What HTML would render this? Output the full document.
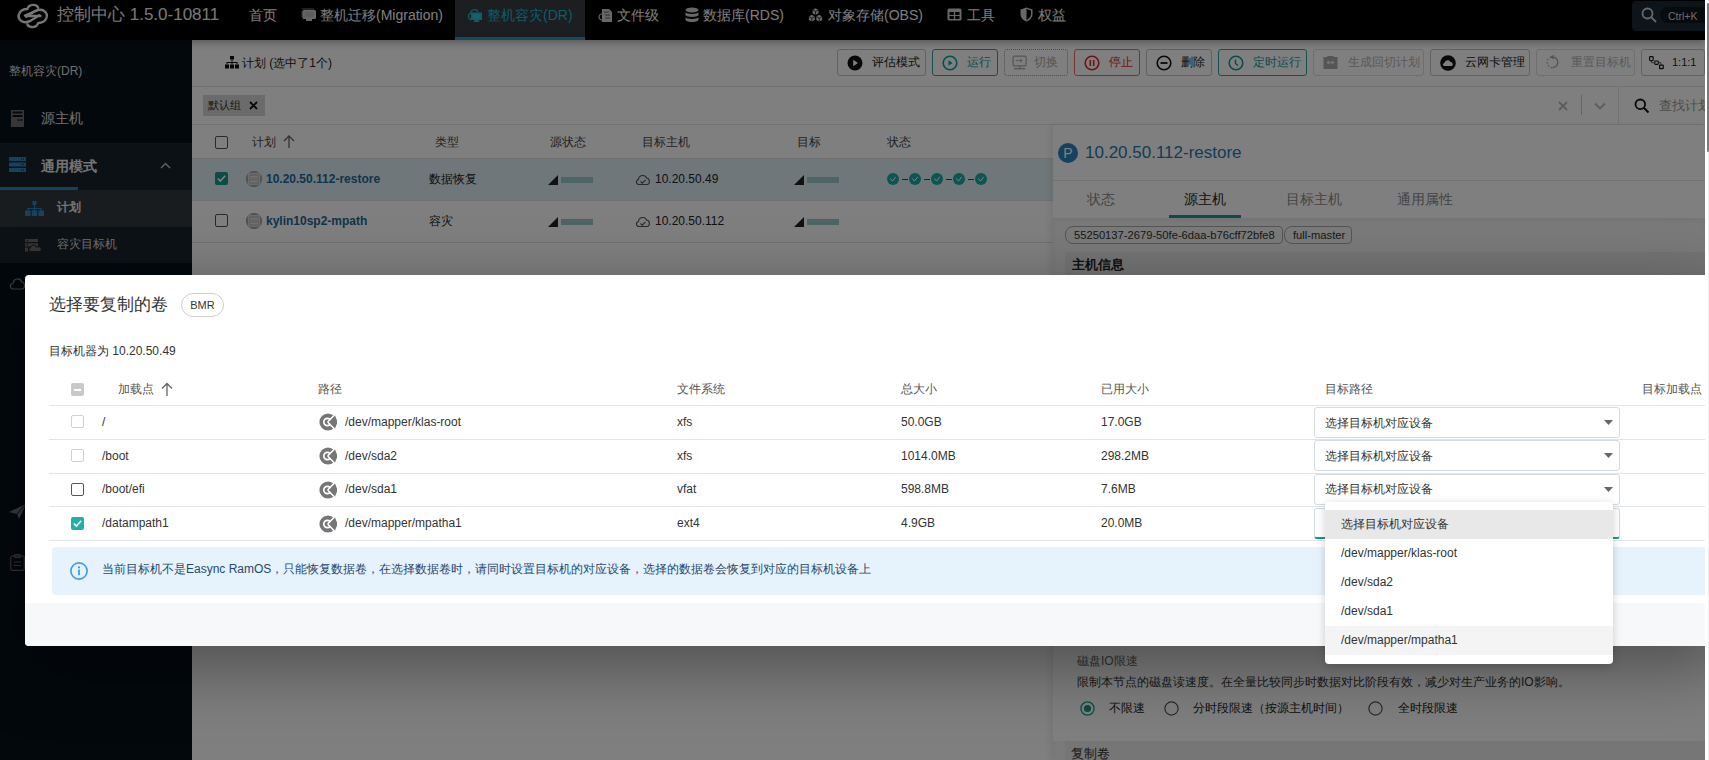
<!DOCTYPE html>
<html><head><meta charset="utf-8">
<style>
*{box-sizing:border-box}
html,body{margin:0;padding:0}
body{width:1709px;height:760px;overflow:hidden;position:relative;background:#fff;font-family:"Liberation Sans",sans-serif;font-size:12px;color:#333}
.abs{position:absolute}
#app{position:absolute;left:0;top:0;width:1705px;height:760px;overflow:hidden;background:#fff}
#nav{position:absolute;left:0;top:0;width:1705px;height:40px;background:#000;z-index:2;box-shadow:0 2px 8px rgba(0,0,0,.35);color:#fafafa;font-size:14px}
#nav .it{position:absolute;top:0;height:30px;line-height:30px;white-space:nowrap}
#side{position:absolute;left:0;top:40px;width:192px;height:720px;background:#07111b;color:#c8c8c8}
#main{position:absolute;left:192px;top:40px;width:1513px;height:720px;background:#fff}
.txt{position:absolute;white-space:nowrap;line-height:1}
#overlay{z-index:3;position:absolute;left:0;top:0;width:1705px;height:760px;background:rgba(0,0,0,.5)}
#modal{z-index:4;position:absolute;left:25px;top:275px;width:1700px;height:371px;background:#fff;border-radius:4px;box-shadow:0 20px 70px rgba(0,0,0,.4);overflow:hidden}
#dd{z-index:5;position:absolute;left:1325px;top:502px;width:288px;height:162px;background:#fff;border-radius:4px;box-shadow:0 2px 10px rgba(0,0,0,.18)}
#strip{position:absolute;left:1705px;top:0;width:4px;height:760px;background:#fff}
#strip:after{content:"";position:absolute;left:2.5px;top:0;width:1.5px;height:760px;background:#f0f0f0}
#strip:before{content:"";position:absolute;z-index:1;left:2.4px;top:3px;width:1.6px;height:149px;background:#7c7c7c;border-radius:1px}
.btn{position:absolute;top:49px;height:27px;border-radius:3px;background:#fff;display:flex;align-items:center;padding-left:9px;font-size:12px;white-space:nowrap}
.btn svg{margin-right:9px;flex:none}
#content{position:absolute;left:0;top:0;width:1705px;height:760px}
</style></head><body>
<div id="app">
  <div id="nav">
    <svg class="abs" style="left:14px;top:0" width="38" height="32" viewBox="0 0 902 760"><g fill="none" stroke="#ededed" stroke-width="56" stroke-linecap="round" stroke-linejoin="round"><path d="M 575 185 C 545 95, 355 80, 315 215 C 130 215, 40 400, 175 500 C 240 545, 330 525, 400 490 L 600 360"/><path d="M 315 575 C 345 665, 535 680, 575 545 C 760 545, 850 360, 715 260 C 650 215, 560 235, 490 270 L 290 400"/><path d="M 260 370 L 560 240"/><path d="M 330 380 L 630 380"/></g></svg>
    <div class="it" style="left:57px;font-size:17px;line-height:29px;color:#f0f0f0">控制中心 1.5.0-10811</div>
    <div class="it" style="left:249px">首页</div>
    <svg class="abs" style="left:301px;top:8px" width="16" height="14" viewBox="0 0 16 14"><rect x="1.5" y="2" width="13.5" height="9" rx="1.5" fill="#d0d0d0"/><rect x="3.5" y="3.5" width="9.5" height="6" fill="#bbb"/><rect x="5" y="11" width="6" height="2" fill="#ccc"/><path d="M2 0v2M4 0v2M6 0v2M8 0v2M10 0v2M12 0v2M0 4h2M0 6h2M0 8h2" stroke="#aaa" stroke-width="0.8"/></svg>
    <div class="it" style="left:320px">整机迁移(Migration)</div>
    <div class="abs" style="left:455px;top:0;width:130px;height:40px;background:#383c44"></div>
    <div class="abs" style="left:455px;top:37px;width:130px;height:3px;background:#2894c6"></div>
    <svg class="abs" style="left:467px;top:8px" width="16" height="15" viewBox="0 0 16 15"><path d="M4.3 11.5 C1 11.5 0.5 6 3.6 5.3 C4 1 10 0.5 11 4" fill="none" stroke="#1cb8cc" stroke-width="1.2"/><rect x="4" y="4.5" width="11" height="7.5" fill="#1cb8cc"/><rect x="5.5" y="6" width="8" height="4.5" fill="#22c6d8"/><path d="M7.5 12h4l1 2h-6z" fill="#1cb8cc"/></svg>
    <div class="it" style="left:487px;color:#1cb8cc">整机容灾(DR)</div>
    <svg class="abs" style="left:598px;top:8px" width="15" height="15" viewBox="0 0 15 15"><path d="M4 1h7l3 3v10H4z" fill="#d0d0d0"/><path d="M6 4h5M6 7h6M6 10h6" stroke="#555" stroke-width="1"/><circle cx="4" cy="9" r="3" fill="none" stroke="#ccc" stroke-width="1.2"/></svg>
    <div class="it" style="left:617px">文件级</div>
    <svg class="abs" style="left:685px;top:7px" width="14" height="16" viewBox="0 0 14 16"><ellipse cx="7" cy="3" rx="6.5" ry="2.6" fill="#d0d0d0"/><path d="M0.5 5.2 C2 7.5 12 7.5 13.5 5.2 V8.2 C12 10.5 2 10.5 0.5 8.2Z" fill="#d0d0d0"/><path d="M0.5 10.2 C2 12.5 12 12.5 13.5 10.2 V13 C12 15.8 2 15.8 0.5 13Z" fill="#d0d0d0"/></svg>
    <div class="it" style="left:703px">数据库(RDS)</div>
    <svg class="abs" style="left:808px;top:8px" width="15" height="14" viewBox="0 0 15 14"><path d="M7.50 0.20 L10.44 1.90 L10.44 5.30 L7.50 7.00 L4.56 5.30 L4.56 1.90Z" fill="#d0d0d0"/><path d="M4.56 1.90 L7.50 3.60 L10.44 1.90 M7.50 3.60 V7.00" stroke="#000" stroke-width="0.7" fill="none"/><path d="M3.80 6.80 L6.74 8.50 L6.74 11.90 L3.80 13.60 L0.86 11.90 L0.86 8.50Z" fill="#d0d0d0"/><path d="M0.86 8.50 L3.80 10.20 L6.74 8.50 M3.80 10.20 V13.60" stroke="#000" stroke-width="0.7" fill="none"/><path d="M11.20 6.80 L14.14 8.50 L14.14 11.90 L11.20 13.60 L8.26 11.90 L8.26 8.50Z" fill="#d0d0d0"/><path d="M8.26 8.50 L11.20 10.20 L14.14 8.50 M11.20 10.20 V13.60" stroke="#000" stroke-width="0.7" fill="none"/></svg>
    <div class="it" style="left:828px">对象存储(OBS)</div>
    <svg class="abs" style="left:947px;top:8px" width="15" height="13" viewBox="0 0 15 13"><rect x="0.5" y="0.5" width="14" height="12" rx="1.5" fill="#d0d0d0"/><rect x="2.5" y="4" width="4.3" height="3" fill="#000"/><rect x="8.2" y="4" width="4.3" height="3" fill="#000"/><rect x="2.5" y="8" width="4.3" height="3" fill="#000"/><rect x="8.2" y="8" width="4.3" height="3" fill="#000"/></svg>
    <div class="it" style="left:967px">工具</div>
    <svg class="abs" style="left:1020px;top:7px" width="13" height="15" viewBox="0 0 13 15"><path d="M6.5 0.5 L12.5 2.5 V7 C12.5 11 9.5 13.5 6.5 14.5 C3.5 13.5 0.5 11 0.5 7 V2.5Z" fill="#d0d0d0"/><path d="M6.5 2 V13 C8.8 12 11 10 11 7 V3.5Z" fill="#000"/></svg>
    <div class="it" style="left:1038px">权益</div>
    <div class="abs" style="left:1632px;top:1px;width:80px;height:30px;background:#1a2a34;border-radius:4px"></div>
    <svg class="abs" style="left:1641px;top:7px" width="16" height="16" viewBox="0 0 16 16"><circle cx="6.5" cy="6.5" r="5" fill="none" stroke="#cfcfcf" stroke-width="1.8"/><path d="M10.2 10.2 L15 15" stroke="#cfcfcf" stroke-width="1.8"/></svg>
    <div class="abs" style="left:1660px;top:7px;width:50px;height:16px;background:#0f171d;border-radius:8px"></div>
    <div class="it" style="left:1668px;top:1px;height:30px;line-height:30px;font-size:10.5px;color:#d8d8d8">Ctrl+K</div>
  </div>
  <div id="side">
    <div class="txt" style="left:9px;top:25px;font-size:12px;line-height:13px;color:#dcdcdc">整机容灾(DR)</div>
    <svg class="abs" style="left:11px;top:70px" width="13" height="17" viewBox="0 0 13 17"><rect x="0" y="0" width="13" height="17" fill="#6e6e6e"/><rect x="1.5" y="1.5" width="10" height="2" fill="#111"/><rect x="1.5" y="5" width="10" height="2" fill="#111"/><rect x="6" y="9.5" width="3" height="1" fill="#111"/><circle cx="10.5" cy="10" r="1" fill="#111"/></svg>
    <div class="txt" style="left:41px;top:71px;font-size:14px;line-height:14px;color:#e0e0e0">源主机</div>
    <div class="abs" style="left:0;top:103px;width:192px;height:47px;background:#18232b"></div>
    <svg class="abs" style="left:9px;top:117px" width="17" height="15" viewBox="0 0 17 15"><rect x="0" y="0" width="17" height="4" rx="0.5" fill="#2a86bd"/><rect x="0" y="5.5" width="17" height="4" rx="0.5" fill="#2a86bd"/><rect x="0" y="11" width="17" height="4" rx="0.5" fill="#2a86bd"/><path d="M12 2h1M14 2h1M12 7.5h1M14 7.5h1M12 13h1M14 13h1" stroke="#0a141c" stroke-width="1"/></svg>
    <div class="txt" style="left:41px;top:119px;font-size:14px;line-height:14px;color:#e8e8e8;font-weight:bold">通用模式</div>
    <svg class="abs" style="left:160px;top:122px" width="11" height="7" viewBox="0 0 11 7"><path d="M1 6 L5.5 1.5 L10 6" fill="none" stroke="#bdbdbd" stroke-width="1.5"/></svg>
    <div class="abs" style="left:0;top:147px;width:78px;height:3px;background:#2a86bd"></div>
    <div class="abs" style="left:0;top:150px;width:192px;height:37px;background:#32383e"></div>
    <svg class="abs" style="left:25px;top:161px" width="19" height="15" viewBox="0 0 19 15"><rect x="7.5" y="0" width="4" height="4" fill="#2a86bd"/><path d="M9.5 4v3M3 7.5h13M3 7v3M9.5 7v3M16 7v3" stroke="#2a86bd" stroke-width="1.2" fill="none"/><rect x="0" y="9.5" width="5.5" height="5.5" fill="#2a86bd"/><rect x="6.75" y="9.5" width="5.5" height="5.5" fill="#2a86bd"/><rect x="13.5" y="9.5" width="5.5" height="5.5" fill="#2a86bd"/></svg>
    <div class="txt" style="left:57px;top:161px;font-size:12px;line-height:12px;color:#e8e8e8;font-weight:bold">计划</div>
    <div class="abs" style="left:0;top:187px;width:192px;height:36px;background:#18242a"></div>
    <svg class="abs" style="left:25px;top:199px" width="16" height="13" viewBox="0 0 16 13"><rect x="0" y="0" width="13" height="3" fill="#6a6a6a"/><circle cx="2.4" cy="1.5" r="0.8" fill="#18242a"/><rect x="0" y="4.3" width="13" height="3.2" fill="#6a6a6a"/><circle cx="2.4" cy="5.9" r="0.8" fill="#18242a"/><rect x="0" y="8.6" width="3" height="4" fill="#6a6a6a"/><path d="M5.6 12.7 A2.1 2.1 0 0 1 5.4 8.6 A3.2 3.2 0 0 1 11.6 8.3 A2.2 2.2 0 0 1 15.3 12.7 Z" fill="#6a6a6a" stroke="#18242a" stroke-width="1"/></svg>
    <div class="txt" style="left:57px;top:198px;font-size:12px;line-height:12px;color:#dcdcdc">容灾目标机</div>
    <svg class="abs" style="left:9px;top:237px" width="17" height="13" viewBox="0 0 17 13"><path d="M4 12 C0.5 12 0.5 6.5 4 6.5 C4.5 1 11.5 0.5 12.5 5 C16.5 5 16.5 12 13 12Z" fill="none" stroke="#7a7a7a" stroke-width="1.2"/></svg>
    <svg class="abs" style="left:9px;top:464px" width="17" height="17" viewBox="0 0 17 17"><path d="M0 8 L17 0 L10 15 L8 10Z" fill="#777"/><path d="M8 10 L17 0" stroke="#07111b" stroke-width="1"/></svg>
    <svg class="abs" style="left:10px;top:514px" width="15" height="17" viewBox="0 0 15 17"><rect x="0.7" y="2" width="13.6" height="14.3" rx="1.5" fill="none" stroke="#666" stroke-width="1.2"/><rect x="4.5" y="0.6" width="6" height="2.8" rx="1" fill="none" stroke="#666" stroke-width="1.2"/><path d="M4 8h7M4 11.5h7" stroke="#666" stroke-width="1.2"/></svg>
  </div>
  <div id="main"></div>
  <div id="content">
    <div class="abs" style="left:192px;top:86px;width:1513px;height:1px;background:#e6e6e6"></div>
    <svg class="abs" style="left:225px;top:56px" width="14" height="13" viewBox="0 0 14 13"><rect x="5" y="0" width="4" height="3.5" fill="#111"/><path d="M7 3.5v2.5M2 6.5h10M2 6v2.5M7 6v2.5M12 6v2.5" stroke="#111" stroke-width="1" fill="none"/><rect x="0" y="8.5" width="4" height="4" fill="#111"/><rect x="5" y="8.5" width="4" height="4" fill="#111"/><rect x="10" y="8.5" width="4" height="4" fill="#111"/></svg>
    <div class="txt" style="left:242px;top:57px;font-size:12px;line-height:12px;color:#222">计划 (选中了1个)</div>
    <div class="btn" style="left:837px;width:89px;border:1px solid #c4c4c4"><svg width="16" height="16" viewBox="0 0 16 16"><circle cx="8" cy="8" r="7.5" fill="#111"/><path d="M6.2 4.8 L11 8 L6.2 11.2Z" fill="#fff"/></svg><span style="color:#222">评估模式</span></div><div class="btn" style="left:932px;width:66px;border:1px solid #2aa7a7"><svg width="16" height="16" viewBox="0 0 16 16"><circle cx="8" cy="8" r="6.8" fill="none" stroke="#0a9e9e" stroke-width="1.6"/><path d="M6.5 5.3 L10.5 8 L6.5 10.7Z" fill="#0a9e9e"/></svg><span style="color:#0a9e9e">运行</span></div><div class="btn" style="left:1004px;width:64px;border:1px dotted #999;padding-left:7px"><svg style="margin-right:6px" width="16" height="16" viewBox="0 0 16 16"><rect x="1.1" y="1.1" width="13" height="9.8" rx="1.6" fill="none" stroke="#aaa" stroke-width="1.2"/><path d="M3.8 5.6h6.3M8.3 3.9L10.2 5.6L8.3 7.3" fill="none" stroke="#aaa" stroke-width="1"/><path d="M7.6 11v2.2" stroke="#aaa" stroke-width="1.2"/><path d="M2 13.7h11.3" stroke="#aaa" stroke-width="1.3"/></svg><span style="color:#aaa">切换</span></div><div class="btn" style="left:1074px;width:66px;border:1px solid #ef6a70"><svg width="16" height="16" viewBox="0 0 16 16"><circle cx="8" cy="8" r="6.8" fill="none" stroke="#e2242c" stroke-width="1.6"/><path d="M6.3 5v6M9.7 5v6" stroke="#e2242c" stroke-width="1.6"/></svg><span style="color:#e2242c">停止</span></div><div class="btn" style="left:1146px;width:66px;border:1px solid #c4c4c4"><svg width="16" height="16" viewBox="0 0 16 16"><circle cx="8" cy="8" r="6.8" fill="none" stroke="#111" stroke-width="1.6"/><path d="M4.5 8h7" stroke="#111" stroke-width="1.8"/></svg><span style="color:#222">删除</span></div><div class="btn" style="left:1218px;width:89px;border:1px solid #2aa7a7"><svg width="16" height="16" viewBox="0 0 16 16"><circle cx="8" cy="8" r="6.8" fill="none" stroke="#0a9e9e" stroke-width="1.6"/><path d="M7.5 4.5V8.5L10 10.5" fill="none" stroke="#0a9e9e" stroke-width="1.5"/></svg><span style="color:#0a9e9e">定时运行</span></div><div class="btn" style="left:1313px;width:111px;border:1px solid #dedede"><svg width="16" height="16" viewBox="0 0 16 16"><rect x="0.5" y="2" width="14" height="12" fill="#aaa"/><rect x="4.5" y="1" width="6" height="2" fill="#aaa"/><path d="M4.5 7.5h6M6 6L4.3 7.5L6 9M9 6L10.7 7.5L9 9" fill="none" stroke="#e8e8e8" stroke-width="1.3"/></svg><span style="color:#b4b4b4">生成回切计划</span></div><div class="btn" style="left:1430px;width:100px;border:1px solid #c4c4c4"><svg width="16" height="16" viewBox="0 0 16 16"><circle cx="8" cy="8" r="7.8" fill="#111"/><path d="M4.3 11 C2.5 11 2.5 8 4.5 8 C4.7 5 9.5 4.3 10.5 7 C13 6.8 13.5 11 11.5 11Z" fill="#fff"/></svg><span style="color:#222">云网卡管理</span></div><div class="btn" style="left:1536px;width:99px;border:1px solid #dedede"><svg width="16" height="16" viewBox="0 0 16 16"><path d="M6.5 2 A5.3 5.3 0 0 1 6.5 12.6" fill="none" stroke="#aaa" stroke-width="1.3"/><path d="M6.2 12.6 A5.3 5.3 0 0 1 4.5 2.4" fill="none" stroke="#aaa" stroke-width="1.3" stroke-dasharray="1.6 1.7"/><path d="M7.6 -0.2 L3.6 2.1 L7.6 4.6Z" fill="#aaa"/></svg><span style="color:#b4b4b4">重置目标机</span></div><div class="btn" style="left:1641px;width:64px;border:1px solid #c4c4c4;padding-left:7px"><svg style="margin-right:8px" width="15" height="14" viewBox="0 0 15 14"><rect x="0.6" y="0.6" width="3.6" height="4" rx="0.8" fill="none" stroke="#111" stroke-width="1.1"/><rect x="5.7" y="5" width="3.6" height="3.4" rx="0.8" fill="none" stroke="#111" stroke-width="1.1"/><rect x="10.6" y="9.2" width="3.6" height="3.4" rx="0.4" fill="none" stroke="#111" stroke-width="1.2"/><path d="M2.4 4.6v2.1h3.3M9.3 6.6h2.6v2.6" fill="none" stroke="#555" stroke-width="0.9"/></svg><span style="color:#222;font-size:11px;position:relative;top:-1px">1:1:1</span></div>
    <div class="abs" style="left:203px;top:95px;width:62px;height:21px;background:#d6d6d6"></div>
    <div class="txt" style="left:208px;top:100px;font-size:11px;line-height:11px;color:#333">默认组</div>
    <svg class="abs" style="left:249px;top:101px" width="9" height="9" viewBox="0 0 9 9"><path d="M1 1L8 8M8 1L1 8" stroke="#111" stroke-width="1.8"/></svg>
    <div class="abs" style="left:192px;top:124px;width:1513px;height:1px;background:#e6e6e6"></div>
    <svg class="abs" style="left:1558px;top:101px" width="10" height="10" viewBox="0 0 10 10"><path d="M1 1L9 9M9 1L1 9" stroke="#b8b8b8" stroke-width="1.8"/></svg>
    <div class="abs" style="left:1581px;top:95px;width:1px;height:20px;background:#c8c8c8"></div>
    <svg class="abs" style="left:1594px;top:102px" width="12" height="8" viewBox="0 0 12 8"><path d="M1 1.5L6 6.5L11 1.5" fill="none" stroke="#bbb" stroke-width="1.8"/></svg>
    <div class="abs" style="left:1618px;top:87px;width:1px;height:37px;background:#e6e6e6"></div>
    <svg class="abs" style="left:1634px;top:98px" width="16" height="16" viewBox="0 0 16 16"><circle cx="6.3" cy="6.3" r="4.8" fill="none" stroke="#111" stroke-width="1.8"/><path d="M9.8 9.8L14.5 14.5" stroke="#111" stroke-width="2"/></svg>
    <div class="txt" style="left:1659px;top:99px;font-size:13px;line-height:13px;color:#999">查找计划</div>
    <div class="abs" style="left:215px;top:136px;width:13px;height:13px;border:1.5px solid #555;border-radius:2px;background:#fff"></div>
    <div class="txt" style="left:252px;top:136px;font-size:12px;line-height:12px;color:#444">计划</div>
    <svg class="abs" style="left:283px;top:135px" width="12" height="13" viewBox="0 0 12 13"><path d="M6 1V13M1 6L6 1L11 6" fill="none" stroke="#666" stroke-width="1.3"/></svg>
    <div class="txt" style="left:435px;top:136px;font-size:12px;line-height:12px;color:#444">类型</div>
    <div class="txt" style="left:550px;top:136px;font-size:12px;line-height:12px;color:#444">源状态</div>
    <div class="txt" style="left:642px;top:136px;font-size:12px;line-height:12px;color:#444">目标主机</div>
    <div class="txt" style="left:797px;top:136px;font-size:12px;line-height:12px;color:#444">目标</div>
    <div class="txt" style="left:887px;top:136px;font-size:12px;line-height:12px;color:#444">状态</div>
    <div class="abs" style="left:192px;top:158px;width:861px;height:1px;background:#e0e0e0"></div>
    <div class="abs" style="left:192px;top:159px;width:861px;height:41px;background:#deeff6"></div>
    <div class="abs" style="left:192px;top:200px;width:861px;height:1px;background:#e0e0e0"></div>
    <div class="abs" style="left:192px;top:242px;width:861px;height:1px;background:#e0e0e0"></div>
    <div class="abs" style="left:215px;top:172px;width:13px;height:13px;border-radius:2px;background:#17998f"><svg style="position:absolute;left:0;top:0" width="13" height="13" viewBox="0 0 13 13"><path d="M2.8 6.5L5.3 9L10.2 3.8" fill="none" stroke="#fff" stroke-width="1.6"/></svg></div>
    <div class="abs" style="left:215px;top:214px;width:13px;height:13px;border:1.5px solid #555;border-radius:2px;background:#fff"></div>
    <div class="abs" style="left:246px;top:171px"><svg width="16" height="16" viewBox="0 0 16 16"><circle cx="8" cy="8" r="8" fill="#949494"/><rect x="2.3" y="2.3" width="11.4" height="11.4" rx="1.6" fill="#c4c4c4" stroke="#e2e2e2" stroke-width="1.1"/><rect x="4.2" y="5.1" width="7.6" height="1.3" fill="#e6e6e6"/><rect x="4.2" y="7.5" width="7.6" height="1.3" fill="#d2d2d2"/><rect x="4.2" y="9.9" width="7.6" height="1.3" fill="#e6e6e6"/></svg></div>
    <div class="abs" style="left:246px;top:213px"><svg width="16" height="16" viewBox="0 0 16 16"><circle cx="8" cy="8" r="8" fill="#949494"/><rect x="2.3" y="2.3" width="11.4" height="11.4" rx="1.6" fill="#c4c4c4" stroke="#e2e2e2" stroke-width="1.1"/><rect x="4.2" y="5.1" width="7.6" height="1.3" fill="#e6e6e6"/><rect x="4.2" y="7.5" width="7.6" height="1.3" fill="#d2d2d2"/><rect x="4.2" y="9.9" width="7.6" height="1.3" fill="#e6e6e6"/></svg></div>
    <div class="txt" style="left:266px;top:173px;font-size:12px;line-height:12px;color:#1d6a9c;font-weight:bold">10.20.50.112-restore</div>
    <div class="txt" style="left:266px;top:215px;font-size:12px;line-height:12px;color:#1d6a9c;font-weight:bold">kylin10sp2-mpath</div>
    <div class="txt" style="left:429px;top:173px;font-size:12px;line-height:12px;color:#222">数据恢复</div>
    <div class="txt" style="left:429px;top:215px;font-size:12px;line-height:12px;color:#222">容灾</div>
    <svg class="abs" style="left:548px;top:175px" width="46" height="10" viewBox="0 0 46 10"><path d="M0 10L10 0V10Z" fill="#222"/><rect x="13" y="2" width="32" height="6" fill="#9ccaca"/></svg><svg class="abs" style="left:548px;top:217px" width="46" height="10" viewBox="0 0 46 10"><path d="M0 10L10 0V10Z" fill="#222"/><rect x="13" y="2" width="32" height="6" fill="#9ccaca"/></svg>
    <div class="abs" style="left:635px;top:173px"><svg width="16" height="13" viewBox="0 0 16 13"><path d="M4 11.5 C1 11.5 0.5 7 3.5 6.5 C3.8 2 10 1 11.5 5 C15 5 15.5 11.5 12 11.5Z" fill="none" stroke="#555" stroke-width="1.1"/><path d="M5.5 8.5L7.3 10.2L10.5 6.8" fill="none" stroke="#555" stroke-width="1.1"/></svg></div>
    <div class="abs" style="left:635px;top:215px"><svg width="16" height="13" viewBox="0 0 16 13"><path d="M4 11.5 C1 11.5 0.5 7 3.5 6.5 C3.8 2 10 1 11.5 5 C15 5 15.5 11.5 12 11.5Z" fill="none" stroke="#555" stroke-width="1.1"/><path d="M5.5 8.5L7.3 10.2L10.5 6.8" fill="none" stroke="#555" stroke-width="1.1"/></svg></div>
    <div class="txt" style="left:655px;top:173px;font-size:12px;line-height:12px;color:#222">10.20.50.49</div>
    <div class="txt" style="left:655px;top:215px;font-size:12px;line-height:12px;color:#222">10.20.50.112</div>
    <svg class="abs" style="left:794px;top:175px" width="46" height="10" viewBox="0 0 46 10"><path d="M0 10L10 0V10Z" fill="#222"/><rect x="13" y="2" width="32" height="6" fill="#9ccaca"/></svg><svg class="abs" style="left:794px;top:217px" width="46" height="10" viewBox="0 0 46 10"><path d="M0 10L10 0V10Z" fill="#222"/><rect x="13" y="2" width="32" height="6" fill="#9ccaca"/></svg>
    <div class="abs" style="left:887px;top:173px;height:12px"><svg width="12" height="12" viewBox="0 0 12 12"><circle cx="6" cy="6" r="6" fill="#15aca6"/><path d="M3.3 5.4L5.5 8.1L8.7 3.9" fill="none" stroke="#fff" stroke-width="1"/></svg></div><div class="abs" style="left:902px;top:179px;width:6px;height:1.2px;background:#444"></div><div class="abs" style="left:909px;top:173px;height:12px"><svg width="12" height="12" viewBox="0 0 12 12"><circle cx="6" cy="6" r="6" fill="#15aca6"/><path d="M3.3 5.4L5.5 8.1L8.7 3.9" fill="none" stroke="#fff" stroke-width="1"/></svg></div><div class="abs" style="left:924px;top:179px;width:6px;height:1.2px;background:#444"></div><div class="abs" style="left:931px;top:173px;height:12px"><svg width="12" height="12" viewBox="0 0 12 12"><circle cx="6" cy="6" r="6" fill="#15aca6"/><path d="M3.3 5.4L5.5 8.1L8.7 3.9" fill="none" stroke="#fff" stroke-width="1"/></svg></div><div class="abs" style="left:946px;top:179px;width:6px;height:1.2px;background:#444"></div><div class="abs" style="left:953px;top:173px;height:12px"><svg width="12" height="12" viewBox="0 0 12 12"><circle cx="6" cy="6" r="6" fill="#15aca6"/><path d="M3.3 5.4L5.5 8.1L8.7 3.9" fill="none" stroke="#fff" stroke-width="1"/></svg></div><div class="abs" style="left:968px;top:179px;width:6px;height:1.2px;background:#444"></div><div class="abs" style="left:975px;top:173px;height:12px"><svg width="12" height="12" viewBox="0 0 12 12"><circle cx="6" cy="6" r="6" fill="#15aca6"/><path d="M3.3 5.4L5.5 8.1L8.7 3.9" fill="none" stroke="#fff" stroke-width="1"/></svg></div>

    <div class="abs" style="left:1053px;top:125px;width:652px;height:635px;background:#fff;box-shadow:-3px 0 6px rgba(0,0,0,.08)"></div>
    <div class="abs" style="left:1058px;top:143px;width:20px;height:20px;border-radius:10px;background:#2a84bd;color:#fff;font-size:14px;line-height:20px;text-align:center">P</div>
    <div class="txt" style="left:1085px;top:144px;font-size:17px;line-height:17px;color:#2678b0">10.20.50.112-restore</div>
    <div class="abs" style="left:1053px;top:180px;width:652px;height:1px;background:#e6e6e6"></div>
    <div class="txt" style="left:1087px;top:192px;font-size:14px;line-height:14px;color:#888">状态</div>
    <div class="txt" style="left:1184px;top:192px;font-size:14px;line-height:14px;color:#222">源主机</div>
    <div class="txt" style="left:1286px;top:192px;font-size:14px;line-height:14px;color:#888">目标主机</div>
    <div class="txt" style="left:1397px;top:192px;font-size:14px;line-height:14px;color:#888">通用属性</div>
    <div class="abs" style="left:1169px;top:215px;width:72px;height:3px;background:#17998f"></div>
    <div class="abs" style="left:1053px;top:218px;width:652px;height:542px;background:#f4f4f4;box-shadow:inset 0 3px 4px rgba(0,0,0,.04)"></div>
    <div class="abs" style="left:1065px;top:226px;width:218px;height:18px;border:1px solid #aaa;border-radius:8px 4px 4px 8px;font-size:11.2px;line-height:16px;padding-left:8px;color:#333;white-space:nowrap">55250137-2679-50fe-6daa-b76cff72bfe8</div>
    <div class="abs" style="left:1284px;top:226px;width:68px;height:18px;border:1px solid #aaa;border-radius:8px 4px 4px 8px;font-size:11.2px;line-height:16px;padding-left:8px;color:#333;white-space:nowrap">full-master</div>
    <div class="abs" style="left:1065px;top:252px;width:640px;height:508px;background:#e8e8e8"></div>
    <div class="txt" style="left:1072px;top:258px;font-size:13px;line-height:13px;color:#222;font-weight:bold">主机信息</div>
    <div class="abs" style="left:1053px;top:646px;width:652px;height:95px;background:#fff"></div>
    <div class="txt" style="left:1077px;top:655px;font-size:12px;line-height:12px;color:#666">磁盘IO限速</div>
    <div class="txt" style="left:1077px;top:676px;font-size:12px;line-height:12px;color:#333">限制本节点的磁盘读速度。在全量比较同步时数据对比阶段有效，减少对生产业务的IO影响。</div>
    <svg class="abs" style="left:1080px;top:701px" width="15" height="15" viewBox="0 0 15 15"><circle cx="7.5" cy="7.5" r="6.6" fill="none" stroke="#17998f" stroke-width="1.3"/><circle cx="7.5" cy="7.5" r="3.6" fill="#17998f"/></svg>
    <div class="txt" style="left:1109px;top:702px;font-size:12px;line-height:12px;color:#222">不限速</div>
    <svg class="abs" style="left:1164px;top:701px" width="15" height="15" viewBox="0 0 15 15"><circle cx="7.5" cy="7.5" r="6.6" fill="none" stroke="#555" stroke-width="1.2"/></svg>
    <div class="txt" style="left:1193px;top:702px;font-size:12px;line-height:12px;color:#222">分时段限速（按源主机时间）</div>
    <svg class="abs" style="left:1368px;top:701px" width="15" height="15" viewBox="0 0 15 15"><circle cx="7.5" cy="7.5" r="6.6" fill="none" stroke="#555" stroke-width="1.2"/></svg>
    <div class="txt" style="left:1398px;top:702px;font-size:12px;line-height:12px;color:#222">全时段限速</div>
    <div class="abs" style="left:1065px;top:741px;width:640px;height:19px;background:#ececec"></div>
    <div class="txt" style="left:1071px;top:747px;font-size:13px;line-height:13px;color:#333">复制卷</div>

  </div>
  <div id="overlay"></div>
  <div id="modal"><div class="txt" style="left:24px;top:21px;font-size:17px;line-height:17px;color:#333;">选择要复制的卷</div><div class="abs" style="left:156px;top:18px;width:43px;height:24px;border:1px solid #cfcfcf;border-radius:12px;font-size:11px;line-height:22px;text-align:center;color:#333">BMR</div><div class="txt" style="left:24px;top:70px;font-size:12px;line-height:12px;color:#333;">目标机器为 10.20.50.49</div><div class="abs" style="left:46px;top:108px;width:13px;height:13px;background:#c9c9c9;border-radius:2px"><div class="abs" style="left:3px;top:6px;width:7px;height:1.5px;background:#fff"></div></div><div class="txt" style="left:93px;top:108px;font-size:12px;line-height:12px;color:#555;">加载点</div><svg class="abs" style="left:136px;top:107px" width="12" height="14" viewBox="0 0 12 14"><path d="M6 1.5V14M1 6.5L6 1.5L11 6.5" fill="none" stroke="#666" stroke-width="1.3"/></svg><div class="txt" style="left:293px;top:108px;font-size:12px;line-height:12px;color:#555;">路径</div><div class="txt" style="left:652px;top:108px;font-size:12px;line-height:12px;color:#555;">文件系统</div><div class="txt" style="left:876px;top:108px;font-size:12px;line-height:12px;color:#555;">总大小</div><div class="txt" style="left:1076px;top:108px;font-size:12px;line-height:12px;color:#555;">已用大小</div><div class="txt" style="left:1300px;top:108px;font-size:12px;line-height:12px;color:#555;">目标路径</div><div class="txt" style="left:1617px;top:108px;font-size:12px;line-height:12px;color:#555;">目标加载点</div><div class="abs" style="left:24px;top:130px;width:1700px;height:1px;background:#dfe5ea"></div><div class="abs" style="left:24px;top:164px;width:1700px;height:1px;background:#dfe5ea"></div><div class="abs" style="left:24px;top:198px;width:1700px;height:1px;background:#dfe5ea"></div><div class="abs" style="left:24px;top:231px;width:1700px;height:1px;background:#dfe5ea"></div><div class="abs" style="left:24px;top:265px;width:1700px;height:1px;background:#dfe5ea"></div><div class="abs" style="left:46px;top:140px;width:13px;height:13px;border:1.5px solid #d0d0d0;border-radius:2px;background:#fff"></div><div class="txt" style="left:77px;top:141px;font-size:12px;line-height:12px;color:#333;">/</div><div class="abs" style="left:294px;top:138px;width:18px;height:18px"><svg width="18" height="18" viewBox="0 0 18 18"><circle cx="9" cy="9" r="8.6" fill="#767676"/><circle cx="8.4" cy="9" r="3.6" fill="none" stroke="#fff" stroke-width="1.7"/><path d="M9.6 9 L16 2.2 L18.5 9 L16 15.8Z" fill="#767676"/><path d="M8.6 9 L15.2 2.3 M8.6 9 L15.2 15.7" stroke="#fff" stroke-width="1.5"/></svg></div><div class="txt" style="left:320px;top:141px;font-size:12px;line-height:12px;color:#333;">/dev/mapper/klas-root</div><div class="txt" style="left:652px;top:141px;font-size:12px;line-height:12px;color:#333;">xfs</div><div class="txt" style="left:876px;top:141px;font-size:12px;line-height:12px;color:#333;">50.0GB</div><div class="txt" style="left:1076px;top:141px;font-size:12px;line-height:12px;color:#333;">17.0GB</div><div class="abs" style="left:1289px;top:132px;width:306px;height:31px;border:1px solid #d3dbe3;border-radius:3px;background:#fff;"></div><div class="txt" style="left:1300px;top:142px;font-size:12px;line-height:12px;color:#333;">选择目标机对应设备</div><svg class="abs" style="left:1579px;top:145px" width="9" height="5" viewBox="0 0 9 5"><path d="M0 0H9L4.5 5Z" fill="#666"/></svg><div class="abs" style="left:46px;top:174px;width:13px;height:13px;border:1.5px solid #d0d0d0;border-radius:2px;background:#fff"></div><div class="txt" style="left:77px;top:175px;font-size:12px;line-height:12px;color:#333;">/boot</div><div class="abs" style="left:294px;top:172px;width:18px;height:18px"><svg width="18" height="18" viewBox="0 0 18 18"><circle cx="9" cy="9" r="8.6" fill="#767676"/><circle cx="8.4" cy="9" r="3.6" fill="none" stroke="#fff" stroke-width="1.7"/><path d="M9.6 9 L16 2.2 L18.5 9 L16 15.8Z" fill="#767676"/><path d="M8.6 9 L15.2 2.3 M8.6 9 L15.2 15.7" stroke="#fff" stroke-width="1.5"/></svg></div><div class="txt" style="left:320px;top:175px;font-size:12px;line-height:12px;color:#333;">/dev/sda2</div><div class="txt" style="left:652px;top:175px;font-size:12px;line-height:12px;color:#333;">xfs</div><div class="txt" style="left:876px;top:175px;font-size:12px;line-height:12px;color:#333;">1014.0MB</div><div class="txt" style="left:1076px;top:175px;font-size:12px;line-height:12px;color:#333;">298.2MB</div><div class="abs" style="left:1289px;top:165px;width:306px;height:31px;border:1px solid #d3dbe3;border-radius:3px;background:#fff;"></div><div class="txt" style="left:1300px;top:175px;font-size:12px;line-height:12px;color:#333;">选择目标机对应设备</div><svg class="abs" style="left:1579px;top:178px" width="9" height="5" viewBox="0 0 9 5"><path d="M0 0H9L4.5 5Z" fill="#666"/></svg><div class="abs" style="left:46px;top:208px;width:13px;height:13px;border:1.5px solid #555;border-radius:2px;background:#fff"></div><div class="txt" style="left:77px;top:208px;font-size:12px;line-height:12px;color:#333;">/boot/efi</div><div class="abs" style="left:294px;top:206px;width:18px;height:18px"><svg width="18" height="18" viewBox="0 0 18 18"><circle cx="9" cy="9" r="8.6" fill="#767676"/><circle cx="8.4" cy="9" r="3.6" fill="none" stroke="#fff" stroke-width="1.7"/><path d="M9.6 9 L16 2.2 L18.5 9 L16 15.8Z" fill="#767676"/><path d="M8.6 9 L15.2 2.3 M8.6 9 L15.2 15.7" stroke="#fff" stroke-width="1.5"/></svg></div><div class="txt" style="left:320px;top:208px;font-size:12px;line-height:12px;color:#333;">/dev/sda1</div><div class="txt" style="left:652px;top:208px;font-size:12px;line-height:12px;color:#333;">vfat</div><div class="txt" style="left:876px;top:208px;font-size:12px;line-height:12px;color:#333;">598.8MB</div><div class="txt" style="left:1076px;top:208px;font-size:12px;line-height:12px;color:#333;">7.6MB</div><div class="abs" style="left:1289px;top:199px;width:306px;height:31px;border:1px solid #d3dbe3;border-radius:3px;background:#fff;"></div><div class="txt" style="left:1300px;top:208px;font-size:12px;line-height:12px;color:#333;">选择目标机对应设备</div><svg class="abs" style="left:1579px;top:212px" width="9" height="5" viewBox="0 0 9 5"><path d="M0 0H9L4.5 5Z" fill="#666"/></svg><div class="abs" style="left:46px;top:242px;width:13px;height:13px;border-radius:2px;background:#1fb0ac"><svg style="position:absolute;left:0;top:0" width="13" height="13" viewBox="0 0 13 13"><path d="M2.8 6.5L5.3 9L10.2 3.8" fill="none" stroke="#fff" stroke-width="1.6"/></svg></div><div class="txt" style="left:77px;top:242px;font-size:12px;line-height:12px;color:#333;">/datampath1</div><div class="abs" style="left:294px;top:240px;width:18px;height:18px"><svg width="18" height="18" viewBox="0 0 18 18"><circle cx="9" cy="9" r="8.6" fill="#767676"/><circle cx="8.4" cy="9" r="3.6" fill="none" stroke="#fff" stroke-width="1.7"/><path d="M9.6 9 L16 2.2 L18.5 9 L16 15.8Z" fill="#767676"/><path d="M8.6 9 L15.2 2.3 M8.6 9 L15.2 15.7" stroke="#fff" stroke-width="1.5"/></svg></div><div class="txt" style="left:320px;top:242px;font-size:12px;line-height:12px;color:#333;">/dev/mapper/mpatha1</div><div class="txt" style="left:652px;top:242px;font-size:12px;line-height:12px;color:#333;">ext4</div><div class="txt" style="left:876px;top:242px;font-size:12px;line-height:12px;color:#333;">4.9GB</div><div class="txt" style="left:1076px;top:242px;font-size:12px;line-height:12px;color:#333;">20.0MB</div><div class="abs" style="left:1289px;top:233px;width:306px;height:31px;border:1px solid #d3dbe3;border-radius:3px;background:#fff;border-bottom:2px solid #17998f;"></div><div class="abs" style="left:27px;top:272px;width:1700px;height:48px;background:#e6f2fc;border-radius:4px"></div><svg class="abs" style="left:45px;top:287px" width="18" height="18" viewBox="0 0 18 18"><circle cx="9" cy="9" r="8.1" fill="none" stroke="#3d9af0" stroke-width="1.6"/><circle cx="9" cy="5.4" r="1.1" fill="#3d9af0"/><rect x="8.1" y="7.6" width="1.8" height="5.6" fill="#3d9af0"/></svg><div class="txt" style="left:77px;top:288px;font-size:12px;line-height:12px;color:#1f4a73;">当前目标机不是Easync RamOS，只能恢复数据卷，在选择数据卷时，请同时设置目标机的对应设备，选择的数据卷会恢复到对应的目标机设备上</div><div class="abs" style="left:0;top:328px;width:1700px;height:80px;background:#f7f8fa"></div></div>
  <div id="dd"><div class="abs" style="left:0;top:8px;width:288px;height:29px;background:#e8e8e8"></div><div class="txt" style="left:16px;top:16px;font-size:12px;line-height:12px;color:#333">选择目标机对应设备</div><div class="abs" style="left:0;top:37px;width:288px;height:29px;background:transparent"></div><div class="txt" style="left:16px;top:45px;font-size:12px;line-height:12px;color:#333">/dev/mapper/klas-root</div><div class="abs" style="left:0;top:66px;width:288px;height:29px;background:transparent"></div><div class="txt" style="left:16px;top:74px;font-size:12px;line-height:12px;color:#333">/dev/sda2</div><div class="abs" style="left:0;top:95px;width:288px;height:29px;background:transparent"></div><div class="txt" style="left:16px;top:103px;font-size:12px;line-height:12px;color:#333">/dev/sda1</div><div class="abs" style="left:0;top:124px;width:288px;height:29px;background:#f4f4f4"></div><div class="txt" style="left:16px;top:132px;font-size:12px;line-height:12px;color:#333">/dev/mapper/mpatha1</div></div>
</div>
<div id="strip"></div>
</body></html>
